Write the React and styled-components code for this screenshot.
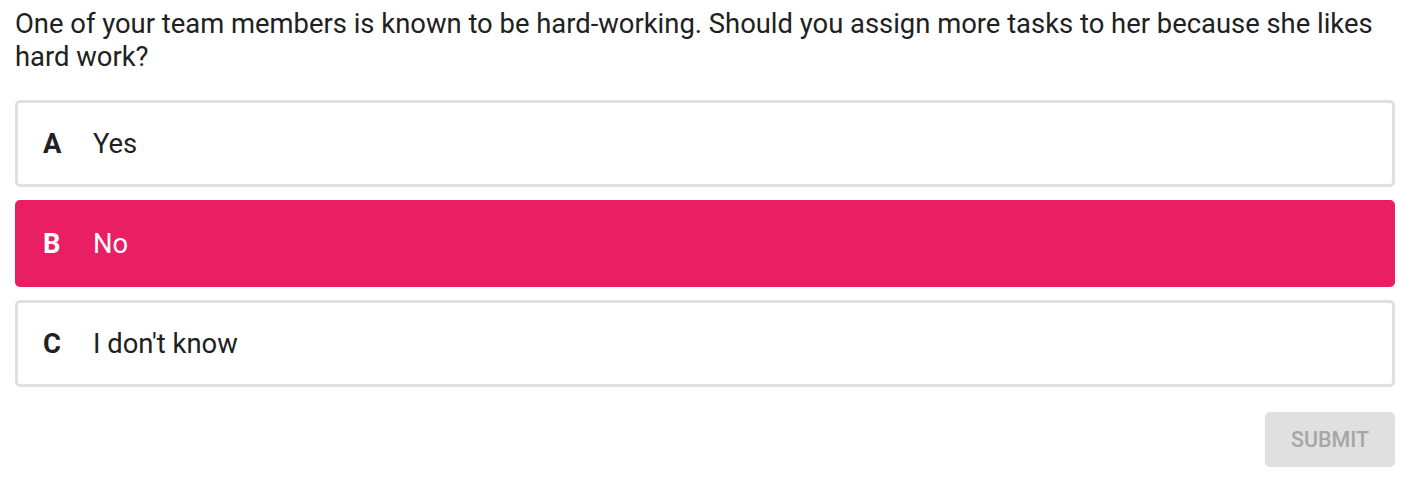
import styled, { createGlobalStyle } from "styled-components";

const GlobalStyle = createGlobalStyle`
  body {
    margin: 0;
    background: #fff;
    font-family: Roboto, "Liberation Sans", sans-serif;
    color: #212121;
  }
`;

const options = [
  { key: "A", text: "Yes" },
  { key: "B", text: "No" },
  { key: "C", text: "I don't know" },
];

const App = () => {
  const selected = "B";

  return (
    <>
      <GlobalStyle />
      <Quiz>
        <Question>
          One of your team members is known to be hard-working. Should you assign more tasks to her because she likes hard work?
        </Question>
        <Options>
          {options.map((o) => (
            <Option key={o.key} $active={o.key === selected}>
              <Letter>{o.key}</Letter>
              <span>{o.text}</span>
            </Option>
          ))}
        </Options>
        <Footer>
          <Submit disabled>Submit</Submit>
        </Footer>
      </Quiz>
    </>
  );
};

export default App;

const Quiz = styled.div`
  padding: 8px 13px 10px 15px;
`;

const Question = styled.p`
  margin: 0 0 26px;
  font-size: 27.4px;
  line-height: 33px;
  color: #212121;
`;

const Options = styled.div`
  display: flex;
  flex-direction: column;
  gap: 13px;
`;

const Option = styled.div`
  display: flex;
  align-items: center;
  height: 87px;
  box-sizing: border-box;
  padding: 0 25px;
  border-radius: 5px;
  border: 3px solid ${(p) => (p.$active ? "#e91e63" : "#e0e0e0")};
  background: ${(p) => (p.$active ? "#e91e63" : "#fff")};
  color: ${(p) => (p.$active ? "#fff" : "#212121")};
  font-size: 27.4px;
`;

const Letter = styled.span`
  width: 50px;
  font-weight: 700;
`;

const Footer = styled.div`
  display: flex;
  justify-content: flex-end;
  margin-top: 25px;
`;

const Submit = styled.button`
  width: 130px;
  height: 55px;
  border: none;
  border-radius: 5px;
  background: #e0e0e0;
  color: #a6a6a6;
  font-family: Roboto, "Liberation Sans", sans-serif;
  font-size: 21.4px;
  font-weight: 500;
  text-transform: uppercase;
`;
